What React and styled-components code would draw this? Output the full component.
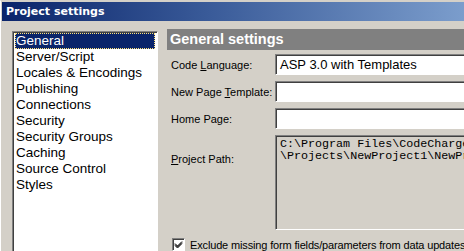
import React from 'react';
import styled, { createGlobalStyle } from 'styled-components';

const GlobalStyle = createGlobalStyle`
  html, body {
    margin: 0;
    padding: 0;
    background: #d4d0c8;
    overflow: hidden;
  }
`;

const Window = styled.div`
  width: 464px;
  height: 251px;
  overflow: hidden;
  display: flex;
  flex-direction: column;
  background: #d4d0c8;
  border-left: 1px solid #ffffff;
  border-top: 1px solid #d4d0c8;
  box-sizing: border-box;
  font-family: "Liberation Sans", Arial, sans-serif;
`;

const TitleBar = styled.div`
  height: 19px;
  margin-top: 1px;
  margin-left: 1px;
  display: flex;
  align-items: center;
  padding-left: 4px;
  background: linear-gradient(90deg, #0a246a 0%, #3a5b99 45%, #7b9dcc 100%);
  color: #ffffff;
  font-family: "DejaVu Sans", Verdana, sans-serif;
  font-weight: bold;
  font-size: 11px;
`;

const Body = styled.div`
  flex: 1;
  display: flex;
  padding: 8px 0 0 11px;
  min-height: 0;
`;

const ListBox = styled.ul`
  list-style: none;
  margin: 2px 0 -10px 0;
  padding: 1px 2px;
  width: 146px;
  box-sizing: border-box;
  background: #ffffff;
  border-top: 1px solid #808080;
  border-left: 1px solid #808080;
  border-right: 1px solid #ffffff;
  box-shadow: inset 1px 1px 0 #404040;
  font-size: 13.5px;
  color: #000000;
`;

const ListItem = styled.li`
  height: 16px;
  line-height: 16px;
  padding-left: 1px;
  box-sizing: border-box;
  white-space: nowrap;
  background: ${p => (p.$selected ? '#0a246a' : 'transparent')};
  color: ${p => (p.$selected ? '#ffffff' : '#000000')};
  outline: ${p => (p.$selected ? '1px dotted #ffe27a' : 'none')};
  outline-offset: -1px;
`;

const Content = styled.div`
  flex: 1;
  margin-left: 9px;
  display: flex;
  flex-direction: column;
  min-width: 0;
`;

const Header = styled.div`
  height: 21px;
  background: #808080;
  color: #ffffff;
  font-weight: bold;
  font-size: 14.5px;
  line-height: 21px;
  padding-left: 3px;
  white-space: nowrap;
`;

const Form = styled.div`
  display: grid;
  grid-template-columns: 104px 1fr;
  grid-template-rows: 21px 21px 21px 95px;
  row-gap: 6px;
  margin-top: 4px;
  padding-left: 4px;
`;

const Label = styled.label`
  font-size: 11px;
  color: #000000;
  white-space: nowrap;
  align-self: ${p => (p.$top ? 'start' : 'center')};
  margin-top: ${p => (p.$top ? '18px' : '0')};
  u { text-decoration: underline; }
`;

const Field = styled.div`
  box-sizing: border-box;
  margin-right: -20px;
  background: ${p => (p.$readOnly ? '#d4d0c8' : '#ffffff')};
  border-top: 1px solid #808080;
  border-left: 1px solid #808080;
  border-bottom: 1px solid #ffffff;
  box-shadow: inset 1px 1px 0 #404040;
  font-size: 13px;
  line-height: 19px;
  padding-left: 4px;
  white-space: nowrap;
  overflow: hidden;
`;

const PathLine = styled.div`
  font-family: "Liberation Mono", "Courier New", monospace;
  font-size: 11.7px;
  line-height: 12px;
  &:first-child { margin-top: 2px; }
`;

const CheckRow = styled.div`
  display: flex;
  align-items: center;
  gap: 5px;
  margin-top: 8px;
  padding-left: 5px;
  font-size: 11px;
  letter-spacing: -0.15px;
  white-space: nowrap;
`;

const CheckBox = styled.span`
  width: 13px;
  height: 13px;
  flex: none;
  box-sizing: border-box;
  background: #ffffff;
  border-top: 1px solid #808080;
  border-left: 1px solid #808080;
  border-right: 1px solid #ffffff;
  border-bottom: 1px solid #ffffff;
  box-shadow: inset 1px 1px 0 #404040;
  display: flex;
  align-items: center;
  justify-content: center;
`;

const items = [
  'General',
  'Server/Script',
  'Locales & Encodings',
  'Publishing',
  'Connections',
  'Security',
  'Security Groups',
  'Caching',
  'Source Control',
  'Styles',
];

export default function App() {
  return (
    <>
      <GlobalStyle />
      <Window>
        <TitleBar>Project settings</TitleBar>
        <Body>
          <ListBox>
            {items.map((it, i) => (
              <ListItem key={it} $selected={i === 0}>{it}</ListItem>
            ))}
          </ListBox>
          <Content>
            <Header>General settings</Header>
            <Form>
              <Label>Code <u>L</u>anguage:</Label>
              <Field>ASP 3.0 with Templates</Field>
              <Label>New Page <u>T</u>emplate:</Label>
              <Field />
              <Label>Home Page:</Label>
              <Field />
              <Label $top><u>P</u>roject Path:</Label>
              <Field $readOnly>
                <PathLine>C:\Program Files\CodeCharge</PathLine>
                <PathLine>\Projects\NewProject1\NewPr</PathLine>
              </Field>
            </Form>
            <CheckRow>
              <CheckBox>
                <svg width="9" height="9" viewBox="0 0 9 9">
                  <path d="M1 3.5 L3.5 6 L8 1.5 M1 4.5 L3.5 7 L8 2.5 M1 5.5 L3.5 8 L8 3.5" stroke="#000" strokeWidth="1" fill="none" />
                </svg>
              </CheckBox>
              Exclude missing form fields/parameters from data updates
            </CheckRow>
          </Content>
        </Body>
      </Window>
    </>
  );
}
